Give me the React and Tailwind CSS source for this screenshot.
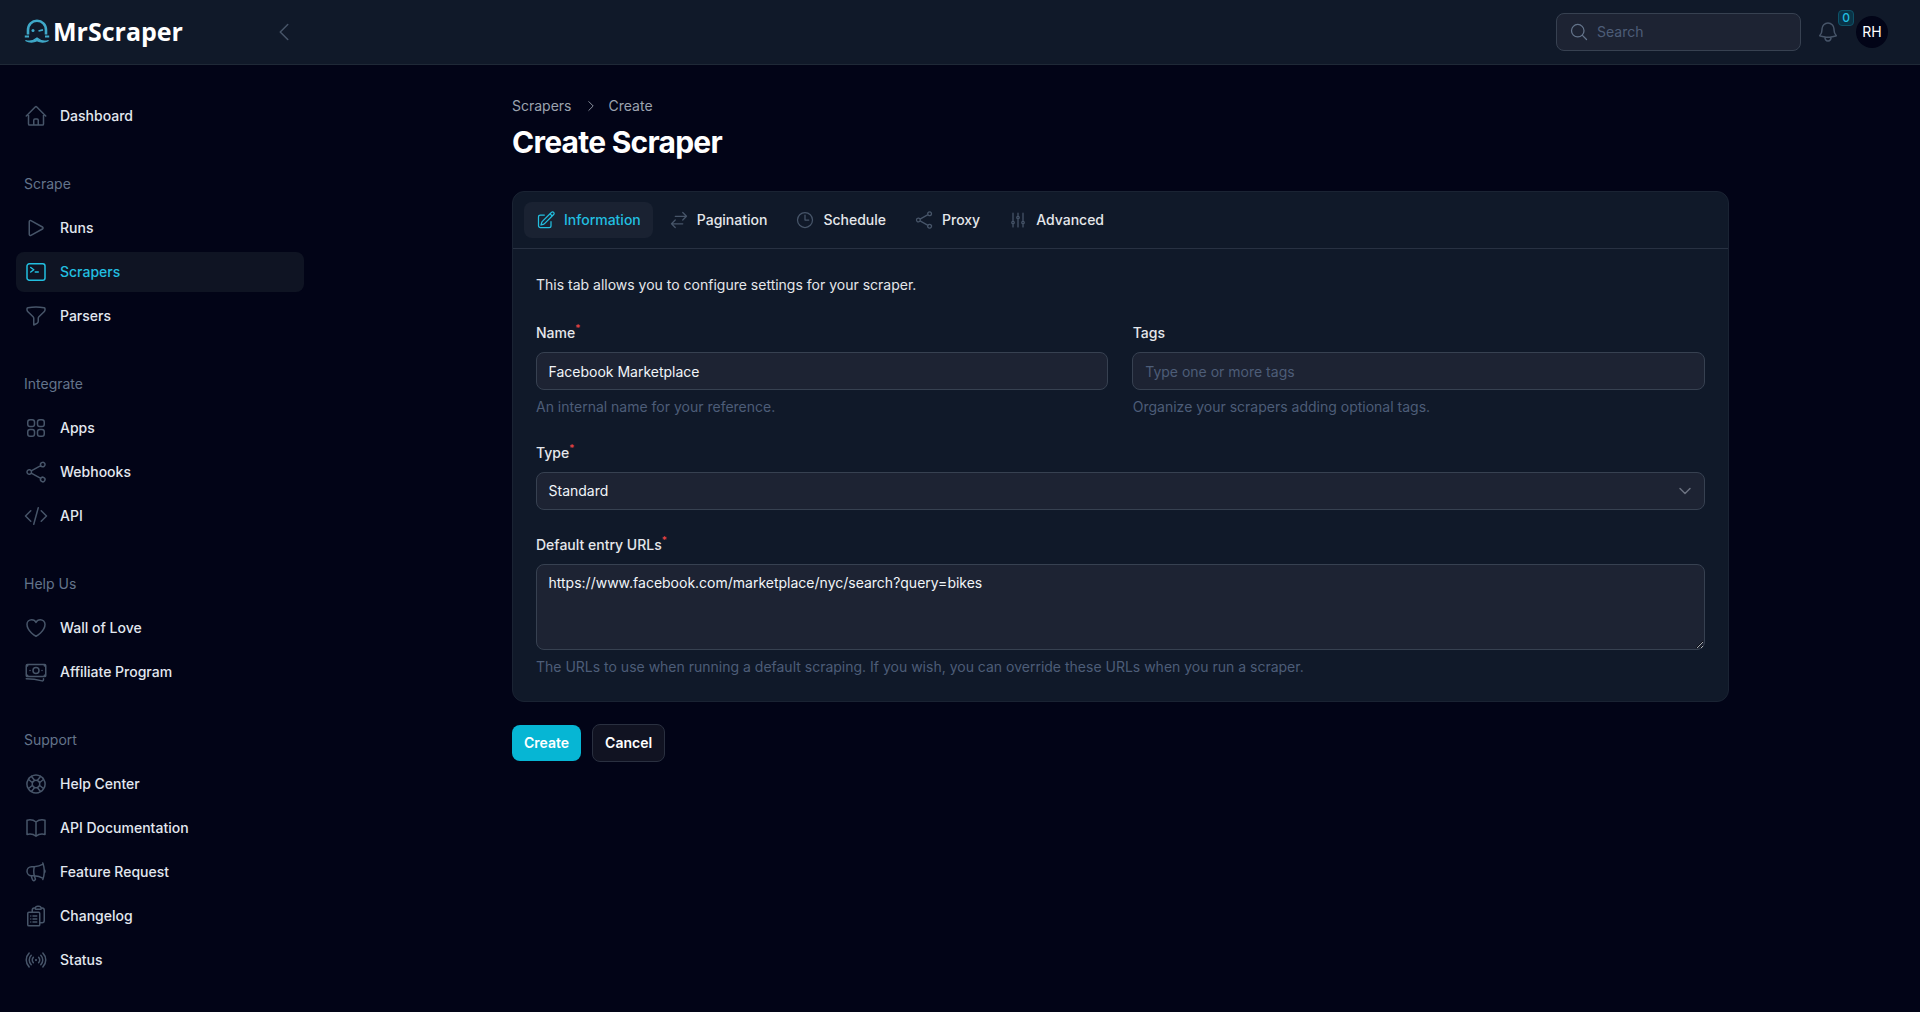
import React from "react";
import {
  HiOutlineHome, HiOutlinePlay, HiOutlineCommandLine, HiOutlineFunnel, HiOutlineSquares2X2, HiOutlineShare,
  HiOutlineCodeBracket, HiOutlineHeart, HiOutlineBanknotes, HiOutlineLifebuoy, HiOutlineBookOpen, HiOutlineMegaphone,
  HiOutlineClipboardDocumentList, HiOutlineSignal, HiOutlinePencilSquare, HiOutlineArrowsRightLeft, HiOutlineClock,
  HiOutlineAdjustmentsVertical, HiOutlineMagnifyingGlass, HiOutlineBell, HiOutlineChevronLeft, HiOutlineChevronRight, HiOutlineChevronDown,
} from "react-icons/hi2";

const Logo = () => (
  <svg width="26" height="24" viewBox="0 0 26 24" fill="none" className="shrink-0">
    <path d="M4 15.5V11C4 5.500 8 1.800 13 1.800S22 5.500 22 11v4.500" stroke="#3fa9c9" strokeWidth="2.6" />
    <circle cx="9" cy="11.500" r="1.500" fill="#3fa9c9" />
    <path d="M14.500 12l4.500-1.200" stroke="#3fa9c9" strokeWidth="1.800" />
    <path d="M.8 17.500h4.200M21 17.500h4.200" stroke="#3fa9c9" strokeWidth="2" />
    <path d="M1.500 21.500c4 1.300 8 .6 11.500-2.500 3.500 3.100 7.500 3.800 11.500 2.500-3 1.800-8 2-11.500.3-3.500 1.700-8.500 1.500-11.500-.3z" fill="#3fa9c9" stroke="#3fa9c9" strokeWidth="1.200" />
  </svg>
);

const NavItem = ({ icon: Icon, label, active }) => (
  <a className={`flex items-center gap-3 h-10 px-2 rounded-lg text-sm font-medium ${active ? "bg-[#0f1423] text-[#22bfe0]" : "text-[#e2e8f0]"}`}>
    <Icon className={`w-6 h-6 shrink-0 ${active ? "text-[#22bfe0]" : "text-[#475569]"}`} />
    <span>{label}</span>
  </a>
);

const groups = [
  { items: [{ icon: HiOutlineHome, label: "Dashboard" }] },
  { title: "Scrape", items: [{ icon: HiOutlinePlay, label: "Runs" }, { icon: HiOutlineCommandLine, label: "Scrapers", active: true }, { icon: HiOutlineFunnel, label: "Parsers" }] },
  { title: "Integrate", items: [{ icon: HiOutlineSquares2X2, label: "Apps" }, { icon: HiOutlineShare, label: "Webhooks" }, { icon: HiOutlineCodeBracket, label: "API" }] },
  { title: "Help Us", items: [{ icon: HiOutlineHeart, label: "Wall of Love" }, { icon: HiOutlineBanknotes, label: "Affiliate Program" }] },
  { title: "Support", items: [{ icon: HiOutlineLifebuoy, label: "Help Center" }, { icon: HiOutlineBookOpen, label: "API Documentation" }, { icon: HiOutlineMegaphone, label: "Feature Request" }, { icon: HiOutlineClipboardDocumentList, label: "Changelog" }, { icon: HiOutlineSignal, label: "Status" }] },
];

const tabs = [
  { icon: HiOutlinePencilSquare, label: "Information", active: true },
  { icon: HiOutlineArrowsRightLeft, label: "Pagination" },
  { icon: HiOutlineClock, label: "Schedule" },
  { icon: HiOutlineShare, label: "Proxy" },
  { icon: HiOutlineAdjustmentsVertical, label: "Advanced" },
];

const Label = ({ children, required }) => (
  <label className="block h-5 pl-[0.5px] text-sm leading-5 font-medium text-[#e5e7eb] mb-[9px]">
    {children}
    {required && <span className="relative -top-1.5 text-[10px] leading-none text-[#ef4444]">*</span>}
  </label>
);

const helpClass = "mt-[7px] pl-[0.5px] text-sm leading-5 text-[#4d5d78]";
const fieldClass = "w-full h-[38px] rounded-lg border border-[#374151] bg-[#1d2333] px-3 text-sm text-[#f1f5f9] outline-none placeholder:text-[#4d5d78]";

export default function App() {
  return (
    <div className="min-h-screen flex flex-col bg-[#020417] font-['Inter',sans-serif] text-[#e5e7eb]">
      <header className="h-[65px] shrink-0 flex items-center bg-[#101929] border-b border-[#1f2937] pl-6 pr-8">
        <div className="flex items-center w-[248px] -mt-0.5">
          <Logo />
          <span className="ml-[3px] text-[25px] leading-none font-bold text-white font-['Open_Sans',sans-serif]">MrScraper</span>
        </div>
        <HiOutlineChevronLeft className="w-6 h-6 text-[#475569]" />
        <div className="ml-auto flex items-center">
          <div className="w-[245px] h-[38px] rounded-lg border border-[#374151] bg-[#1d2333] flex items-center px-3 gap-2">
            <HiOutlineMagnifyingGlass className="w-5 h-5 text-[#64748b]" />
            <span className="text-sm text-[#4d5d78]">Search</span>
          </div>
          <div className="relative ml-[15px] mr-4">
            <HiOutlineBell className="w-6 h-6 text-[#475569]" />
            <span className="absolute -top-[10px] -right-[14px] w-4 h-4 rounded-[4px] border border-[#0e5268] bg-[#0a3346] text-[#22bfe0] text-xs leading-[14px] text-center font-medium">0</span>
          </div>
          <div className="w-8 h-8 rounded-full bg-[#020417] text-white text-sm flex items-center justify-center">RH</div>
        </div>
      </header>
      <div className="flex flex-1">
        <aside className="w-80 shrink-0 pl-4 pr-4 pt-[31px] flex flex-col gap-[38px]">
          {groups.map((g, i) => (
            <div key={i}>
              {g.title && <div className="px-2 mb-[14px] text-sm leading-5 text-[#64748b]">{g.title}</div>}
              <div className="flex flex-col gap-1">
                {g.items.map((it) => <NavItem key={it.label} {...it} />)}
              </div>
            </div>
          ))}
        </aside>
        <main className="flex-1 pt-[31px] pl-[192px]">
          <div className="w-[1217px]">
            <nav className="flex items-center text-sm leading-5 text-[#9ca3af]">
              <span>Scrapers</span>
              <HiOutlineChevronRight className="w-3.5 h-3.5 ml-3 mr-[11px] text-[#9ca3af]" />
              <span>Create</span>
            </nav>
            <h1 className="mt-2 text-[30px] leading-9 font-bold text-white tracking-tight">Create Scraper</h1>
            <section className="mt-[31px] rounded-xl border border-[#1a2333] bg-[#101929]">
              <div className="flex gap-1 px-[11px] py-2.5 border-b border-[#283142]">
                {tabs.map((t) => (
                  <button key={t.label} className={`flex items-center gap-2 h-9 px-3 rounded-lg text-sm font-medium ${t.active ? "bg-[#1a2232] text-[#22bfe0]" : "text-[#e5e7eb]"}`}>
                    <t.icon className={`w-5 h-5 ${t.active ? "text-[#22bfe0]" : "text-[#475569]"}`} />
                    {t.label}
                  </button>
                ))}
              </div>
              <div className="pl-[22.5px] pr-[23px] pt-[26px] pb-6">
                <p className="pl-[0.5px] text-sm leading-5 text-[#e5e7eb] mb-[28px]">This tab allows you to configure settings for your scraper.</p>
                <div className="grid grid-cols-2 gap-6">
                  <div>
                    <Label required>Name</Label>
                    <input className={fieldClass} defaultValue="Facebook Marketplace" />
                    <p className={helpClass}>An internal name for your reference.</p>
                  </div>
                  <div>
                    <Label>Tags</Label>
                    <input className={fieldClass} placeholder="Type one or more tags" />
                    <p className={helpClass}>Organize your scrapers adding optional tags.</p>
                  </div>
                </div>
                <div className="mt-[26px]">
                  <Label required>Type</Label>
                  <div className={`${fieldClass} flex items-center justify-between`}>
                    <span>Standard</span>
                    <HiOutlineChevronDown strokeWidth={2.2} className="w-4 h-4 -mr-px text-[#6b7280]" />
                  </div>
                </div>
                <div className="mt-[25px]">
                  <Label required>Default entry URLs</Label>
                  <textarea className="block w-full h-[86px] rounded-lg border border-[#374151] bg-[#1d2333] px-3 py-2 text-sm leading-5 text-[#f1f5f9] outline-none" defaultValue="https://www.facebook.com/marketplace/nyc/search?query=bikes" />
                  <p className={helpClass}>The URLs to use when running a default scraping. If you wish, you can override these URLs when you run a scraper.</p>
                </div>
              </div>
            </section>
            <div className="mt-[22px] flex items-center gap-[11px]">
              <button className="h-9 px-3 rounded-lg bg-[#06b6d4] text-sm font-semibold text-white">Create</button>
              <button className="h-[38px] px-3 rounded-lg border border-[#2a3040] bg-[#111322] text-sm font-semibold text-white">Cancel</button>
            </div>
          </div>
        </main>
      </div>
    </div>
  );
}
